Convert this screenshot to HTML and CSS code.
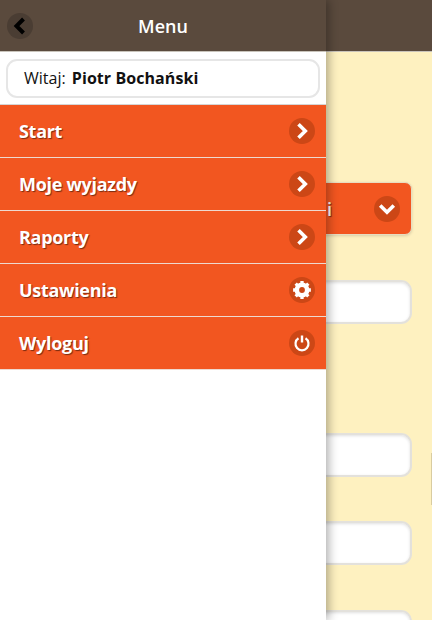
FILE: index.html
```html
<!DOCTYPE html>
<html lang="pl">

<head>
    <meta charset="UTF-8">
    <meta name="viewport" content="width=device-width, initial-scale=1.0">
    <title>Menu</title>
    <link rel="stylesheet" href="styles.css">
</head>

<body>
    <div class="page">
        <div class="page-header"></div>
        <div class="page-content">
            <div class="select-btn">
                <span class="select-text">i</span>
                <span class="round-icon">
                    <svg width="20" height="20" viewBox="0 0 20 20"><path d="M3.200 6.500 10 13.300l6.800-6.800" fill="none" stroke="#fff" stroke-width="3.600"/></svg>
                </span>
            </div>
            <div class="field field-first"></div>
            <div class="field field-second"></div>
            <div class="field field-third"></div>
            <div class="field field-fourth"></div>
            <div class="scroll-mark"></div>
        </div>
    </div>

    <div class="panel">
        <div class="panel-header">
            <a class="back-btn">
                <svg width="18" height="20" viewBox="0 0 18 20"><path d="M12.500 3 5.500 10l7 7" fill="none" stroke="#000" stroke-width="4"/></svg>
            </a>
            <h1>Menu</h1>
        </div>
        <div class="welcome-wrap">
            <div class="welcome">Witaj: <b>Piotr Bochański</b></div>
        </div>
        <ul class="menu">
            <li>Start
                <span class="round-icon">
                    <svg width="20" height="20" viewBox="0 0 20 20"><path d="M6.500 3.200 13.300 10l-6.800 6.800" fill="none" stroke="#fff" stroke-width="3.600"/></svg>
                </span>
            </li>
            <li>Moje wyjazdy
                <span class="round-icon">
                    <svg width="20" height="20" viewBox="0 0 20 20"><path d="M6.500 3.200 13.300 10l-6.800 6.800" fill="none" stroke="#fff" stroke-width="3.600"/></svg>
                </span>
            </li>
            <li>Raporty
                <span class="round-icon">
                    <svg width="20" height="20" viewBox="0 0 20 20"><path d="M6.500 3.200 13.300 10l-6.800 6.800" fill="none" stroke="#fff" stroke-width="3.600"/></svg>
                </span>
            </li>
            <li>Ustawienia
                <span class="round-icon">
                    <svg width="20" height="20" viewBox="0 0 18 18">
                        <circle cx="9" cy="9" r="5" fill="none" stroke="#fff" stroke-width="3.400"/>
                        <path d="M9 1v16M1 9h16M3.300 3.300l11.400 11.400M14.700 3.300 3.300 14.700" stroke="#fff" stroke-width="3"/>
                        <circle cx="9" cy="9" r="2.600" fill="#cc4716"/>
                    </svg>
                </span>
            </li>
            <li>Wyloguj
                <span class="round-icon">
                    <svg width="18" height="18" viewBox="0 0 18 18">
                        <path d="M5.500 4.300a6.500 6.500 0 1 0 7 0" fill="none" stroke="#fff" stroke-width="2.200"/>
                        <path d="M9 1.500v7" fill="none" stroke="#fff" stroke-width="2.400"/>
                    </svg>
                </span>
            </li>
        </ul>
    </div>
</body>

</html>
```

FILE: styles.css
```css
* {
    box-sizing: border-box;
}

html,
body {
    height: 100%;
}

body {
    margin: 0;
    overflow: hidden;
    font-family: "Open Sans", sans-serif;
}

/* page under the menu */
.page {
    height: 620px;
    overflow: hidden;
    position: relative;
    background-color: #fef1c0;
}

.page-header {
    height: 52px;
    background-color: #5a4a3d;
    border-bottom: 1px solid #c9c4bb;
}

.page-content {
    display: flex;
    flex-direction: column;
    align-items: flex-end;
    padding: 130px 20px 0 0;
}

.select-btn {
    display: flex;
    align-items: center;
    justify-content: flex-end;
    width: 200px;
    height: 53px;
    padding-right: 11px;
    background-color: #f25620;
    border: 1px solid #e8ddc0;
    border-radius: 7px;
    color: #fff;
    box-shadow: 0 1px 3px rgba(0, 0, 0, 0.15);
}

.select-text {
    margin-right: 42px;
    font-size: 18px;
    font-weight: 600;
    text-shadow: 1px 1px 1px rgba(0, 0, 0, 0.5);
}

.field {
    flex-shrink: 0;
    width: 200px;
    height: 44px;
    background-color: #fff;
    border: 2px solid #e3e1dc;
    border-radius: 11px;
    box-shadow: inset 0 1px 3px rgba(0, 0, 0, 0.12);
}

.field-first {
    margin-top: 45px;
}

.field-second {
    margin-top: 109px;
}

.field-third {
    margin-top: 44px;
}

.field-fourth {
    margin-top: 45px;
}

.scroll-mark {
    position: absolute;
    top: 453px;
    right: 0;
    width: 1px;
    height: 52px;
    background-color: #d9cca0;
}

/* slide-out menu */
.panel {
    position: absolute;
    top: 0;
    left: 0;
    bottom: 0;
    width: 326px;
    background-color: #fff;
    box-shadow: 3px 0 9px rgba(0, 0, 0, 0.3);
}

.panel-header {
    display: flex;
    align-items: center;
    justify-content: center;
    position: relative;
    height: 52px;
    background-color: #5a4a3d;
    border-bottom: 1px solid #c9c4bb;
}

.panel-header h1 {
    margin: 0;
    color: #fff;
    font-size: 18px;
    font-weight: 600;
}

.back-btn {
    display: flex;
    align-items: center;
    justify-content: center;
    position: absolute;
    top: 13px;
    left: 7px;
    width: 26px;
    height: 26px;
    border-radius: 50%;
    background-color: #4a3d33;
}

.welcome-wrap {
    height: 53px;
    padding: 7px 6px 6px;
    border-bottom: 1px solid #d5d5d5;
}

.welcome {
    height: 39px;
    padding-left: 16px;
    border: 2px solid #e6e6e6;
    border-radius: 11px;
    font-size: 16px;
    line-height: 35px;
    color: #111;
}

.welcome b {
    margin-left: 2px;
    font-weight: 700;
    letter-spacing: 0.07px;
}

.menu {
    margin: 0;
    padding: 0;
    list-style: none;
}

.menu li {
    display: flex;
    align-items: center;
    justify-content: space-between;
    height: 53px;
    padding: 0 11px 0 19px;
    background-color: #f25620;
    border-bottom: 1px solid #eed9cf;
    color: #fff;
    font-size: 18px;
    font-weight: 700;
    letter-spacing: -0.3px;
    text-shadow: 1px 1px 1px rgba(0, 0, 0, 0.5);
}

.round-icon {
    display: flex;
    align-items: center;
    justify-content: center;
    width: 26px;
    height: 26px;
    border-radius: 50%;
    background-color: #cc4716;
}
```
